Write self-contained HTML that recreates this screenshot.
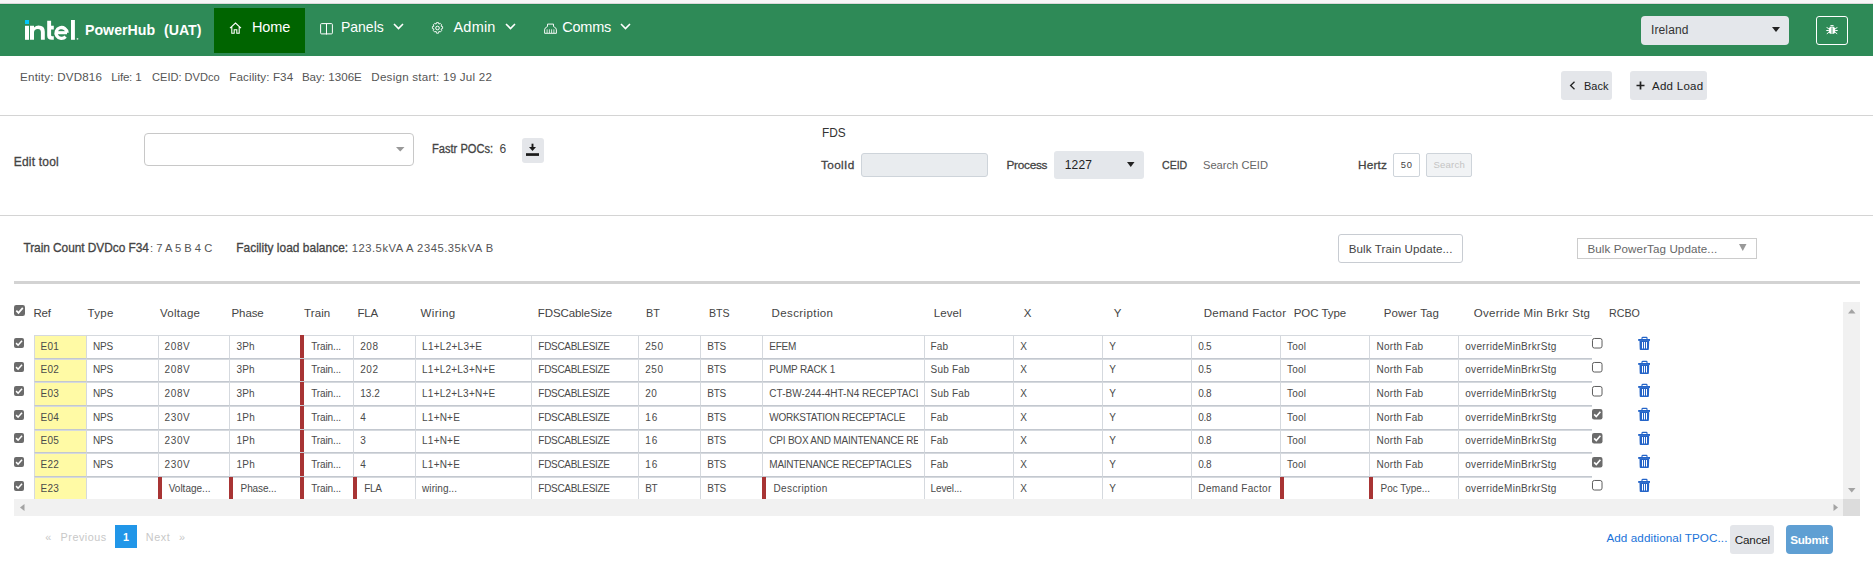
<!DOCTYPE html>
<html><head><meta charset="utf-8"><title>PowerHub</title><style>
*{margin:0;padding:0;box-sizing:border-box}
html,body{width:1873px;height:568px;overflow:hidden;background:#fff;font-family:"Liberation Sans",sans-serif}
.t{position:absolute;white-space:nowrap;line-height:1}
.r{position:absolute}
svg{position:absolute;overflow:visible}
</style></head>
<body>
<div class="r" style="left:0.00px;top:0.00px;width:1873.00px;height:3.00px;background:#f6f6f6"></div>
<div class="r" style="left:0.00px;top:3.00px;width:1873.00px;height:1.00px;background:#dcd8da"></div>
<div class="r" style="left:0.00px;top:4.00px;width:1873.00px;height:52.00px;background:#2e8a57"></div>
<div class="r" style="left:0.00px;top:4.00px;width:1873.00px;height:1.00px;background:#23854f"></div>
<svg style="left:25px;top:20px" width="56" height="21" viewBox="0 0 56 21"><rect x="0" y="0" width="4" height="4" fill="#00c7fd"/><rect x="0" y="5.8" width="4" height="14" fill="#fff"/><path d="M5 19.8 V5.8 H9 V7.4 Q10.8 5.5 13.6 5.5 Q19.8 5.5 19.8 11.8 V19.8 H15.9 V12.3 Q15.9 8.9 12.9 8.9 Q9 8.9 9 12.6 V19.8 Z" fill="#fff"/><path d="M22.2 0.8 H26.1 V5.8 H28.8 V9.4 H26.1 V15.2 Q26.1 16.3 27.3 16.3 H28.8 V19.8 H26.8 Q22.2 19.8 22.2 15.5 Z" fill="#fff"/><path d="M42.1 12.8 A5.55 5.45 0 1 0 40.6 16.7" fill="none" stroke="#fff" stroke-width="3.3"/><path d="M31.4 12.7 H42" fill="none" stroke="#fff" stroke-width="3.1"/><rect x="46" y="0" width="3.9" height="19.8" fill="#fff"/><circle cx="52.5" cy="18.8" r="0.9" fill="#fff" opacity="0.8"/></svg>
<div class="t" style="left:85.20px;top:22.28px;font-size:15.5px;color:#fff;font-weight:bold;transform:scaleX(0.9145);transform-origin:0 0;">PowerHub</div>
<div class="t" style="left:164.40px;top:22.38px;font-size:15.5px;color:#fff;font-weight:bold;transform:scaleX(0.9135);transform-origin:0 0;">(UAT)</div>
<div class="r" style="left:214.00px;top:8.00px;width:91.00px;height:45.00px;background:#006400"></div>
<svg style="left:229px;top:22px" width="13" height="12" viewBox="0 0 13 12"><path d="M1 6.2 L6.5 1 L12 6.2 M2.8 4.6 V11.3 H5.2 V7.8 H7.8 V11.3 H10.2 V4.6" fill="none" stroke="#fff" stroke-width="1.1"/></svg>
<div class="t" style="left:252.00px;top:19.97px;font-size:14.5px;color:#fff;letter-spacing:-0.133px;">Home</div>
<svg style="left:319.5px;top:22.5px" width="13" height="11.5" viewBox="0 0 13 11.5"><rect x="0.6" y="0.6" width="11.8" height="10.3" rx="1" fill="none" stroke="#fff" stroke-width="1"/><path d="M6.5 1 V11.5" fill="none" stroke="#fff" stroke-width="1"/></svg>
<div class="t" style="left:341.00px;top:19.97px;font-size:14.5px;color:#fff;transform:scaleX(0.9639);transform-origin:0 0;">Panels</div>
<svg style="left:392.5px;top:23.4px" width="11" height="7" viewBox="0 0 11 7"><path d="M1 1 L5.5 5.5 L10 1" fill="none" stroke="#fff" stroke-width="1.6"/></svg>
<svg style="left:431px;top:22px" width="13" height="12" viewBox="0 0 13 12"><circle cx="6.5" cy="6" r="1.8" fill="none" stroke="#fff" stroke-width="1"/><path d="M5.5 0.6 H7.5 L7.9 2.1 L9.3 1.4 L10.7 2.8 L10 4.2 L11.6 4.6 V6.6 L10 7 L10.7 8.6 L9.3 10 L7.9 9.3 L7.5 11.2 H5.5 L5.1 9.3 L3.7 10 L2.3 8.6 L3 7 L1.4 6.6 V4.6 L3 4.2 L2.3 2.8 L3.7 1.4 L5.1 2.1 Z" fill="none" stroke="#fff" stroke-width="0.9"/></svg>
<div class="t" style="left:453.50px;top:19.97px;font-size:14.5px;color:#fff;letter-spacing:0.2px;">Admin</div>
<svg style="left:504.7px;top:23.4px" width="11" height="7" viewBox="0 0 11 7"><path d="M1 1 L5.5 5.5 L10 1" fill="none" stroke="#fff" stroke-width="1.6"/></svg>
<svg style="left:543.5px;top:22.5px" width="13" height="11" viewBox="0 0 13 11"><path d="M0.6 10.3 V6.8 Q0.6 4.9 2.6 4.2 Q3.5 3.9 3.5 3 V1.1 H9.5 V3 Q9.5 3.9 10.4 4.2 Q12.4 4.9 12.4 6.8 V10.3 Z" fill="none" stroke="#fff" stroke-width="0.95"/><path d="M3.1 6.3 V10 M5.4 6.3 V10 M7.6 6.3 V10 M9.9 6.3 V10" stroke="#fff" stroke-width="0.8"/></svg>
<div class="t" style="left:562.25px;top:19.97px;font-size:14.5px;color:#fff;letter-spacing:-0.238px;">Comms</div>
<svg style="left:620.1px;top:23.4px" width="11" height="7" viewBox="0 0 11 7"><path d="M1 1 L5.5 5.5 L10 1" fill="none" stroke="#fff" stroke-width="1.6"/></svg>
<div class="r" style="left:1641.00px;top:16.00px;width:148.00px;height:29.00px;background:#e4e7eb;border-radius:4px"></div>
<div class="t" style="left:1651.00px;top:23.59px;font-size:12px;color:#333;letter-spacing:0.117px;">Ireland</div>
<svg style="left:1772px;top:27px" width="8" height="5" viewBox="0 0 8 5"><path d="M0 0 H8 L4 5 Z" fill="#222"/></svg>
<div class="r" style="left:1816.00px;top:16.00px;width:32.00px;height:29.00px;border:1px solid #fff;border-radius:3px"></div>
<svg style="left:1826px;top:23px" width="12" height="12" viewBox="0 0 12 12"><path d="M3.5 3.2 Q6 0.8 8.5 3.2 Z" fill="#fff"/><rect x="2.8" y="3.8" width="6.4" height="7" rx="2.6" fill="#fff"/><path d="M6 4.5 V10.5" stroke="#2e8a57" stroke-width="0.9"/><path d="M0.6 4.5 L2.8 5.6 M11.4 4.5 L9.2 5.6 M0.3 7.5 H2.8 M11.7 7.5 H9.2 M0.8 10.8 L2.9 9.3 M11.2 10.8 L9.1 9.3" stroke="#fff" stroke-width="1"/></svg>
<div class="t" style="left:20.10px;top:71.18px;font-size:11.6px;color:#555;letter-spacing:0.2px;">Entity: DVD816</div>
<div class="t" style="left:111.30px;top:71.18px;font-size:11.6px;color:#555;letter-spacing:-0.217px;">Life: 1</div>
<div class="t" style="left:152.30px;top:71.18px;font-size:11.6px;color:#555;transform:scaleX(0.9549);transform-origin:0 0;">CEID: DVDco</div>
<div class="t" style="left:229.30px;top:71.18px;font-size:11.6px;color:#555;letter-spacing:0.112px;">Facility: F34</div>
<div class="t" style="left:301.90px;top:71.18px;font-size:11.6px;color:#555;letter-spacing:0.0px;">Bay: 1306E</div>
<div class="t" style="left:371.30px;top:71.18px;font-size:11.6px;color:#555;letter-spacing:0.241px;">Design start: 19 Jul 22</div>
<div class="r" style="left:1561.00px;top:71.00px;width:51.00px;height:29.00px;background:#e4e6ea;border-radius:3px"></div>
<svg style="left:1569px;top:81px" width="7" height="9" viewBox="0 0 7 9"><path d="M5.5 0.8 L1.6 4.5 L5.5 8.2" fill="none" stroke="#222" stroke-width="1.3"/></svg>
<div class="t" style="left:1583.60px;top:80.86px;font-size:11.5px;color:#222;transform:scaleX(0.9531);transform-origin:0 0;">Back</div>
<div class="r" style="left:1630.00px;top:71.00px;width:77.00px;height:29.00px;background:#e4e6ea;border-radius:3px"></div>
<svg style="left:1636px;top:81px" width="9" height="9" viewBox="0 0 9 9"><path d="M4.5 0.5 V8.5 M0.5 4.5 H8.5" fill="none" stroke="#222" stroke-width="1.7"/></svg>
<div class="t" style="left:1652.00px;top:80.86px;font-size:11.5px;color:#222;letter-spacing:0.279px;">Add Load</div>
<div class="r" style="left:0.00px;top:115.00px;width:1873.00px;height:1.00px;background:#d4d4d4"></div>
<div class="t" style="left:13.75px;top:155.84px;font-size:12px;color:#444;-webkit-text-stroke:0.3px #444;letter-spacing:0.206px;">Edit tool</div>
<div class="r" style="left:144.00px;top:133.00px;width:270.00px;height:33.00px;border:1px solid #c8c8c8;border-radius:4px"></div>
<svg style="left:395.5px;top:147px" width="9" height="5" viewBox="0 0 9 5"><path d="M0 0 H8.5 L4.25 4.5 Z" fill="#999"/></svg>
<div class="t" style="left:431.90px;top:142.84px;font-size:12px;color:#444;-webkit-text-stroke:0.3px #444;transform:scaleX(0.9258);transform-origin:0 0;">Fastr POCs:</div>
<div class="t" style="left:499.40px;top:142.84px;font-size:12px;color:#444;">6</div>
<div class="r" style="left:522.00px;top:138.00px;width:22.00px;height:25.00px;background:#e4e6ea;border-radius:3px"></div>
<svg style="left:526px;top:144px" width="13" height="12" viewBox="0 0 13 12"><path d="M6.5 -0.3 V4" stroke="#1a1a1a" stroke-width="1.9"/><path d="M3 3 H10 L6.5 7 Z" fill="#1a1a1a"/><rect x="0" y="9.2" width="13" height="2.7" fill="#1a1a1a"/></svg>
<div class="t" style="left:821.50px;top:126.38px;font-size:13.6px;color:#333;transform:scaleX(0.8732);transform-origin:0 0;">FDS</div>
<div class="t" style="left:821.00px;top:160.01px;font-size:11.8px;color:#444;-webkit-text-stroke:0.3px #444;letter-spacing:0.36px;">ToolId</div>
<div class="r" style="left:861.00px;top:153.00px;width:127.00px;height:24.00px;background:#e9ecef;border:1px solid #ced4da;border-radius:3px"></div>
<div class="t" style="left:1006.50px;top:160.01px;font-size:11.8px;color:#444;-webkit-text-stroke:0.3px #444;letter-spacing:-0.275px;">Process</div>
<div class="r" style="left:1054.00px;top:151.00px;width:90.00px;height:28.00px;background:#e4e7eb;border-radius:3px"></div>
<div class="t" style="left:1064.75px;top:158.84px;font-size:12px;color:#222;letter-spacing:0.15px;">1227</div>
<svg style="left:1127px;top:162px" width="8" height="5" viewBox="0 0 8 5"><path d="M0 0 H7.5 L3.75 5 Z" fill="#222"/></svg>
<div class="t" style="left:1162.25px;top:159.81px;font-size:11.8px;color:#444;-webkit-text-stroke:0.3px #444;transform:scaleX(0.8954);transform-origin:0 0;">CEID</div>
<div class="t" style="left:1203.20px;top:159.61px;font-size:11.8px;color:#666;transform:scaleX(0.9441);transform-origin:0 0;">Search CEID</div>
<div class="t" style="left:1358.00px;top:159.81px;font-size:11.8px;color:#444;-webkit-text-stroke:0.3px #444;letter-spacing:0.2px;">Hertz</div>
<div class="r" style="left:1393.00px;top:153.00px;width:27.00px;height:24.00px;border:1px solid #ced4da;border-radius:2px"></div>
<div class="t" style="left:1400.80px;top:160.04px;font-size:9.4px;color:#444;letter-spacing:0.75px;">50</div>
<div class="r" style="left:1426.00px;top:153.00px;width:46.00px;height:24.00px;background:#f1f3f5;border:1px solid #ced4da;border-radius:2px"></div>
<div class="t" style="left:1433.40px;top:159.87px;font-size:9.6px;color:#c4c4c4;letter-spacing:0.2px;">Search</div>
<div class="r" style="left:0.00px;top:215.00px;width:1873.00px;height:1.00px;background:#d4d4d4"></div>
<div class="t" style="left:23.40px;top:242.72px;font-size:11.9px;color:#444;-webkit-text-stroke:0.3px #444;letter-spacing:-0.048px;">Train Count DVDco F34</div>
<div class="t" style="left:150.00px;top:243.12px;font-size:11.2px;color:#555;letter-spacing:0.004px;">: 7 A 5 B 4 C</div>
<div class="t" style="left:236.20px;top:242.72px;font-size:11.9px;color:#444;-webkit-text-stroke:0.3px #444;letter-spacing:0.043px;">Facility load balance:</div>
<div class="t" style="left:351.70px;top:243.12px;font-size:11.2px;color:#555;letter-spacing:0.539px;">123.5kVA A 2345.35kVA B</div>
<div class="r" style="left:1338.00px;top:234.00px;width:125.00px;height:29.00px;border:1px solid #c8ccd2;border-radius:3px"></div>
<div class="t" style="left:1348.75px;top:242.93px;font-size:11.6px;color:#444;letter-spacing:0.097px;">Bulk Train Update...</div>
<div class="r" style="left:1577.00px;top:238.00px;width:180.00px;height:21.00px;border:1px solid #cccccc"></div>
<div class="t" style="left:1587.50px;top:242.93px;font-size:11.6px;color:#666;letter-spacing:0.095px;">Bulk PowerTag Update...</div>
<svg style="left:1738.5px;top:244px" width="8" height="7" viewBox="0 0 8 7"><path d="M0 0 H7.5 L3.75 7 Z" fill="#999"/></svg>
<div class="r" style="left:14.00px;top:281.00px;width:1846.00px;height:3.00px;background:#d3d3d3"></div>
<svg style="left:14px;top:305px" width="11" height="11" viewBox="0 0 11 11"><rect x="0" y="0" width="11" height="11" rx="2.2" fill="#6b6b6b"/><path d="M2.3 5.6 L4.5 7.9 L8.8 2.9" fill="none" stroke="#fff" stroke-width="1.7"/></svg>
<div class="t" style="left:33.50px;top:307.51px;font-size:11.5px;color:#444;letter-spacing:-0.225px;">Ref</div>
<div class="t" style="left:87.50px;top:307.51px;font-size:11.5px;color:#444;letter-spacing:0.317px;">Type</div>
<div class="t" style="left:160.00px;top:307.51px;font-size:11.5px;color:#444;letter-spacing:0.275px;">Voltage</div>
<div class="t" style="left:231.50px;top:307.51px;font-size:11.5px;color:#444;letter-spacing:-0.088px;">Phase</div>
<div class="t" style="left:304.00px;top:307.51px;font-size:11.5px;color:#444;letter-spacing:0.112px;">Train</div>
<div class="t" style="left:357.50px;top:307.51px;font-size:11.5px;color:#444;letter-spacing:-0.25px;">FLA</div>
<div class="t" style="left:420.60px;top:307.51px;font-size:11.5px;color:#444;letter-spacing:0.41px;">Wiring</div>
<div class="t" style="left:537.75px;top:307.51px;font-size:11.5px;color:#444;letter-spacing:-0.082px;">FDSCableSize</div>
<div class="t" style="left:645.60px;top:307.51px;font-size:11.5px;color:#444;transform:scaleX(0.9388);transform-origin:0 0;">BT</div>
<div class="t" style="left:708.75px;top:307.51px;font-size:11.5px;color:#444;transform:scaleX(0.9239);transform-origin:0 0;">BTS</div>
<div class="t" style="left:771.60px;top:307.51px;font-size:11.5px;color:#444;letter-spacing:0.39px;">Description</div>
<div class="t" style="left:933.75px;top:307.51px;font-size:11.5px;color:#444;letter-spacing:0.062px;">Level</div>
<div class="t" style="left:1023.75px;top:307.51px;font-size:11.5px;color:#444;">X</div>
<div class="t" style="left:1113.75px;top:307.51px;font-size:11.5px;color:#444;">Y</div>
<div class="t" style="left:1203.75px;top:307.51px;font-size:11.5px;color:#444;letter-spacing:0.25px;">Demand Factor</div>
<div class="t" style="left:1293.75px;top:307.51px;font-size:11.5px;color:#444;letter-spacing:-0.05px;">POC Type</div>
<div class="t" style="left:1383.75px;top:307.51px;font-size:11.5px;color:#444;letter-spacing:0.138px;">Power Tag</div>
<div class="t" style="left:1473.75px;top:307.51px;font-size:11.5px;color:#444;letter-spacing:0.285px;">Override Min Brkr Stg</div>
<div class="t" style="left:1608.50px;top:307.51px;font-size:11.5px;color:#444;transform:scaleX(0.9293);transform-origin:0 0;">RCBO</div>
<div class="r" style="left:0;top:0;width:1873px;height:499px;overflow:hidden">
<svg style="left:14px;top:338.40000000000003px" width="10" height="10" viewBox="0 0 11 11"><rect x="0" y="0" width="11" height="11" rx="2.2" fill="#6b6b6b"/><path d="M2.3 5.6 L4.5 7.9 L8.8 2.9" fill="none" stroke="#fff" stroke-width="1.7"/></svg>
<div class="r" style="left:34.00px;top:335.00px;width:53.00px;height:24.00px;background:#fffaa5;border:1px solid #d5d9de;border-bottom:1px solid #c3c8cf;"></div>
<div class="r" style="left:35.00px;top:335.00px;width:45.00px;height:24px;overflow:hidden"><div class="t" style="left:5.60px;top:6.58px;font-size:10px;color:#4a4a4a;letter-spacing:0.154px">E01</div></div>
<div class="r" style="left:86.00px;top:335.00px;width:73.00px;height:24.00px;background:#fff;border:1px solid #d5d9de;border-bottom:1px solid #c3c8cf;"></div>
<div class="r" style="left:87.00px;top:335.00px;width:65.00px;height:24px;overflow:hidden"><div class="t" style="left:6.10px;top:6.58px;font-size:10px;color:#4a4a4a;letter-spacing:-0.302px">NPS</div></div>
<div class="r" style="left:158.00px;top:335.00px;width:72.00px;height:24.00px;background:#fff;border:1px solid #d5d9de;border-bottom:1px solid #c3c8cf;"></div>
<div class="r" style="left:159.00px;top:335.00px;width:64.00px;height:24px;overflow:hidden"><div class="t" style="left:5.60px;top:6.58px;font-size:10px;color:#4a4a4a;letter-spacing:0.610px">208V</div></div>
<div class="r" style="left:229.00px;top:335.00px;width:72.00px;height:24.00px;background:#fff;border:1px solid #d5d9de;border-bottom:1px solid #c3c8cf;"></div>
<div class="r" style="left:230.00px;top:335.00px;width:64.00px;height:24px;overflow:hidden"><div class="t" style="left:6.50px;top:6.58px;font-size:10px;color:#4a4a4a;letter-spacing:0.154px">3Ph</div></div>
<div class="r" style="left:300.00px;top:335.00px;width:54.00px;height:24.00px;background:#fff;border:1px solid #d5d9de;border-bottom:1px solid #c3c8cf;"></div>
<div class="r" style="left:300.00px;top:335.00px;width:3.80px;height:23.00px;background:#a83434"></div>
<div class="r" style="left:301.00px;top:335.00px;width:46.00px;height:24px;overflow:hidden"><div class="t" style="left:10.20px;top:6.58px;font-size:10px;color:#4a4a4a;letter-spacing:-0.121px">Train...</div></div>
<div class="r" style="left:353.00px;top:335.00px;width:63.00px;height:24.00px;background:#fff;border:1px solid #d5d9de;border-bottom:1px solid #c3c8cf;"></div>
<div class="r" style="left:354.00px;top:335.00px;width:55.00px;height:24px;overflow:hidden"><div class="t" style="left:6.20px;top:6.58px;font-size:10px;color:#4a4a4a;letter-spacing:0.610px">208</div></div>
<div class="r" style="left:415.00px;top:335.00px;width:117.00px;height:24.00px;background:#fff;border:1px solid #d5d9de;border-bottom:1px solid #c3c8cf;"></div>
<div class="r" style="left:416.00px;top:335.00px;width:109.00px;height:24px;overflow:hidden"><div class="t" style="left:6.10px;top:6.58px;font-size:10px;color:#4a4a4a;letter-spacing:0.258px">L1+L2+L3+E</div></div>
<div class="r" style="left:531.00px;top:335.00px;width:108.00px;height:24.00px;background:#fff;border:1px solid #d5d9de;border-bottom:1px solid #c3c8cf;"></div>
<div class="r" style="left:532.00px;top:335.00px;width:100.00px;height:24px;overflow:hidden"><div class="t" style="left:6.35px;top:6.58px;font-size:10px;color:#4a4a4a;letter-spacing:-0.302px">FDSCABLESIZE</div></div>
<div class="r" style="left:638.00px;top:335.00px;width:63.00px;height:24.00px;background:#fff;border:1px solid #d5d9de;border-bottom:1px solid #c3c8cf;"></div>
<div class="r" style="left:639.00px;top:335.00px;width:55.00px;height:24px;overflow:hidden"><div class="t" style="left:6.20px;top:6.58px;font-size:10px;color:#4a4a4a;letter-spacing:0.610px">250</div></div>
<div class="r" style="left:700.00px;top:335.00px;width:63.00px;height:24.00px;background:#fff;border:1px solid #d5d9de;border-bottom:1px solid #c3c8cf;"></div>
<div class="r" style="left:701.00px;top:335.00px;width:55.00px;height:24px;overflow:hidden"><div class="t" style="left:6.35px;top:6.58px;font-size:10px;color:#4a4a4a;letter-spacing:-0.302px">BTS</div></div>
<div class="r" style="left:762.00px;top:335.00px;width:163.00px;height:24.00px;background:#fff;border:1px solid #d5d9de;border-bottom:1px solid #c3c8cf;"></div>
<div class="r" style="left:763.00px;top:335.00px;width:155.00px;height:24px;overflow:hidden"><div class="t" style="left:6.35px;top:6.58px;font-size:10px;color:#4a4a4a;letter-spacing:-0.302px">EFEM</div></div>
<div class="r" style="left:924.00px;top:335.00px;width:90.00px;height:24.00px;background:#fff;border:1px solid #d5d9de;border-bottom:1px solid #c3c8cf;"></div>
<div class="r" style="left:925.00px;top:335.00px;width:82.00px;height:24px;overflow:hidden"><div class="t" style="left:5.60px;top:6.58px;font-size:10px;color:#4a4a4a;letter-spacing:0.083px">Fab</div></div>
<div class="r" style="left:1013.00px;top:335.00px;width:90.00px;height:24.00px;background:#fff;border:1px solid #d5d9de;border-bottom:1px solid #c3c8cf;"></div>
<div class="r" style="left:1014.00px;top:335.00px;width:82.00px;height:24px;overflow:hidden"><div class="t" style="left:6.20px;top:6.58px;font-size:10px;color:#4a4a4a;letter-spacing:0.000px">X</div></div>
<div class="r" style="left:1102.00px;top:335.00px;width:90.00px;height:24.00px;background:#fff;border:1px solid #d5d9de;border-bottom:1px solid #c3c8cf;"></div>
<div class="r" style="left:1103.00px;top:335.00px;width:82.00px;height:24px;overflow:hidden"><div class="t" style="left:6.35px;top:6.58px;font-size:10px;color:#4a4a4a;letter-spacing:0.000px">Y</div></div>
<div class="r" style="left:1191.00px;top:335.00px;width:90.00px;height:24.00px;background:#fff;border:1px solid #d5d9de;border-bottom:1px solid #c3c8cf;"></div>
<div class="r" style="left:1192.00px;top:335.00px;width:82.00px;height:24px;overflow:hidden"><div class="t" style="left:6.35px;top:6.58px;font-size:10px;color:#4a4a4a;letter-spacing:-0.300px">0.5</div></div>
<div class="r" style="left:1280.00px;top:335.00px;width:90.00px;height:24.00px;background:#fff;border:1px solid #d5d9de;border-bottom:1px solid #c3c8cf;"></div>
<div class="r" style="left:1281.00px;top:335.00px;width:82.00px;height:24px;overflow:hidden"><div class="t" style="left:6.10px;top:6.58px;font-size:10px;color:#4a4a4a;letter-spacing:0.211px">Tool</div></div>
<div class="r" style="left:1369.00px;top:335.00px;width:90.00px;height:24.00px;background:#fff;border:1px solid #d5d9de;border-bottom:1px solid #c3c8cf;"></div>
<div class="r" style="left:1370.00px;top:335.00px;width:82.00px;height:24px;overflow:hidden"><div class="t" style="left:6.50px;top:6.58px;font-size:10px;color:#4a4a4a;letter-spacing:0.264px">North Fab</div></div>
<div class="r" style="left:1458.00px;top:335.00px;width:134.25px;height:24.00px;background:#fff;border:1px solid #d5d9de;border-bottom:1px solid #c3c8cf;border-right:none;"></div>
<div class="r" style="left:1459.00px;top:335.00px;width:127.00px;height:24px;overflow:hidden"><div class="t" style="left:6.20px;top:6.58px;font-size:10px;color:#4a4a4a;letter-spacing:0.332px">overrideMinBrkrStg</div></div>
<svg style="left:1592.25px;top:338.1px" width="10.5" height="10.5" viewBox="0 0 11 11"><rect x="0.5" y="0.5" width="10" height="10" rx="2" fill="#fff" stroke="#555" stroke-width="1"/></svg>
<svg style="left:1638px;top:337px" width="12" height="13" viewBox="0 0 12 13"><path d="M4 2.3 V1 Q4 0.4 4.6 0.4 H8.4 Q9 0.4 9 1 V2.3" fill="none" stroke="#2464c8" stroke-width="1.1"/><rect x="0.2" y="2" width="11.8" height="1.9" fill="#2464c8"/><path d="M1.5 3.8 H11.2 L10.9 12.2 Q10.8 13 10.1 13 H2.5 Q1.8 13 1.7 12.2 Z" fill="#2464c8"/><path d="M4.5 5 V11.5 M6.5 5 V11.5 M8.5 5 V11.5" stroke="#fff" stroke-width="1"/></svg>
<svg style="left:14px;top:362.1px" width="10" height="10" viewBox="0 0 11 11"><rect x="0" y="0" width="11" height="11" rx="2.2" fill="#6b6b6b"/><path d="M2.3 5.6 L4.5 7.9 L8.8 2.9" fill="none" stroke="#fff" stroke-width="1.7"/></svg>
<div class="r" style="left:34.00px;top:359.00px;width:53.00px;height:23.00px;background:#fffaa5;border:1px solid #d5d9de;border-bottom:1px solid #c3c8cf;"></div>
<div class="r" style="left:35.00px;top:359.00px;width:45.00px;height:24px;overflow:hidden"><div class="t" style="left:5.60px;top:6.28px;font-size:10px;color:#4a4a4a;letter-spacing:0.154px">E02</div></div>
<div class="r" style="left:86.00px;top:359.00px;width:73.00px;height:23.00px;background:#fff;border:1px solid #d5d9de;border-bottom:1px solid #c3c8cf;"></div>
<div class="r" style="left:87.00px;top:359.00px;width:65.00px;height:24px;overflow:hidden"><div class="t" style="left:6.10px;top:6.28px;font-size:10px;color:#4a4a4a;letter-spacing:-0.302px">NPS</div></div>
<div class="r" style="left:158.00px;top:359.00px;width:72.00px;height:23.00px;background:#fff;border:1px solid #d5d9de;border-bottom:1px solid #c3c8cf;"></div>
<div class="r" style="left:159.00px;top:359.00px;width:64.00px;height:24px;overflow:hidden"><div class="t" style="left:5.60px;top:6.28px;font-size:10px;color:#4a4a4a;letter-spacing:0.610px">208V</div></div>
<div class="r" style="left:229.00px;top:359.00px;width:72.00px;height:23.00px;background:#fff;border:1px solid #d5d9de;border-bottom:1px solid #c3c8cf;"></div>
<div class="r" style="left:230.00px;top:359.00px;width:64.00px;height:24px;overflow:hidden"><div class="t" style="left:6.50px;top:6.28px;font-size:10px;color:#4a4a4a;letter-spacing:0.154px">3Ph</div></div>
<div class="r" style="left:300.00px;top:359.00px;width:54.00px;height:23.00px;background:#fff;border:1px solid #d5d9de;border-bottom:1px solid #c3c8cf;"></div>
<div class="r" style="left:300.00px;top:359.00px;width:3.80px;height:22.00px;background:#a83434"></div>
<div class="r" style="left:301.00px;top:359.00px;width:46.00px;height:24px;overflow:hidden"><div class="t" style="left:10.20px;top:6.28px;font-size:10px;color:#4a4a4a;letter-spacing:-0.121px">Train...</div></div>
<div class="r" style="left:353.00px;top:359.00px;width:63.00px;height:23.00px;background:#fff;border:1px solid #d5d9de;border-bottom:1px solid #c3c8cf;"></div>
<div class="r" style="left:354.00px;top:359.00px;width:55.00px;height:24px;overflow:hidden"><div class="t" style="left:6.20px;top:6.28px;font-size:10px;color:#4a4a4a;letter-spacing:0.610px">202</div></div>
<div class="r" style="left:415.00px;top:359.00px;width:117.00px;height:23.00px;background:#fff;border:1px solid #d5d9de;border-bottom:1px solid #c3c8cf;"></div>
<div class="r" style="left:416.00px;top:359.00px;width:109.00px;height:24px;overflow:hidden"><div class="t" style="left:6.10px;top:6.28px;font-size:10px;color:#4a4a4a;letter-spacing:0.218px">L1+L2+L3+N+E</div></div>
<div class="r" style="left:531.00px;top:359.00px;width:108.00px;height:23.00px;background:#fff;border:1px solid #d5d9de;border-bottom:1px solid #c3c8cf;"></div>
<div class="r" style="left:532.00px;top:359.00px;width:100.00px;height:24px;overflow:hidden"><div class="t" style="left:6.35px;top:6.28px;font-size:10px;color:#4a4a4a;letter-spacing:-0.302px">FDSCABLESIZE</div></div>
<div class="r" style="left:638.00px;top:359.00px;width:63.00px;height:23.00px;background:#fff;border:1px solid #d5d9de;border-bottom:1px solid #c3c8cf;"></div>
<div class="r" style="left:639.00px;top:359.00px;width:55.00px;height:24px;overflow:hidden"><div class="t" style="left:6.20px;top:6.28px;font-size:10px;color:#4a4a4a;letter-spacing:0.610px">250</div></div>
<div class="r" style="left:700.00px;top:359.00px;width:63.00px;height:23.00px;background:#fff;border:1px solid #d5d9de;border-bottom:1px solid #c3c8cf;"></div>
<div class="r" style="left:701.00px;top:359.00px;width:55.00px;height:24px;overflow:hidden"><div class="t" style="left:6.35px;top:6.28px;font-size:10px;color:#4a4a4a;letter-spacing:-0.302px">BTS</div></div>
<div class="r" style="left:762.00px;top:359.00px;width:163.00px;height:23.00px;background:#fff;border:1px solid #d5d9de;border-bottom:1px solid #c3c8cf;"></div>
<div class="r" style="left:763.00px;top:359.00px;width:155.00px;height:24px;overflow:hidden"><div class="t" style="left:6.35px;top:6.28px;font-size:10px;color:#4a4a4a;letter-spacing:-0.166px">PUMP RACK 1</div></div>
<div class="r" style="left:924.00px;top:359.00px;width:90.00px;height:23.00px;background:#fff;border:1px solid #d5d9de;border-bottom:1px solid #c3c8cf;"></div>
<div class="r" style="left:925.00px;top:359.00px;width:82.00px;height:24px;overflow:hidden"><div class="t" style="left:5.60px;top:6.28px;font-size:10px;color:#4a4a4a;letter-spacing:0.196px">Sub Fab</div></div>
<div class="r" style="left:1013.00px;top:359.00px;width:90.00px;height:23.00px;background:#fff;border:1px solid #d5d9de;border-bottom:1px solid #c3c8cf;"></div>
<div class="r" style="left:1014.00px;top:359.00px;width:82.00px;height:24px;overflow:hidden"><div class="t" style="left:6.20px;top:6.28px;font-size:10px;color:#4a4a4a;letter-spacing:0.000px">X</div></div>
<div class="r" style="left:1102.00px;top:359.00px;width:90.00px;height:23.00px;background:#fff;border:1px solid #d5d9de;border-bottom:1px solid #c3c8cf;"></div>
<div class="r" style="left:1103.00px;top:359.00px;width:82.00px;height:24px;overflow:hidden"><div class="t" style="left:6.35px;top:6.28px;font-size:10px;color:#4a4a4a;letter-spacing:0.000px">Y</div></div>
<div class="r" style="left:1191.00px;top:359.00px;width:90.00px;height:23.00px;background:#fff;border:1px solid #d5d9de;border-bottom:1px solid #c3c8cf;"></div>
<div class="r" style="left:1192.00px;top:359.00px;width:82.00px;height:24px;overflow:hidden"><div class="t" style="left:6.35px;top:6.28px;font-size:10px;color:#4a4a4a;letter-spacing:-0.300px">0.5</div></div>
<div class="r" style="left:1280.00px;top:359.00px;width:90.00px;height:23.00px;background:#fff;border:1px solid #d5d9de;border-bottom:1px solid #c3c8cf;"></div>
<div class="r" style="left:1281.00px;top:359.00px;width:82.00px;height:24px;overflow:hidden"><div class="t" style="left:6.10px;top:6.28px;font-size:10px;color:#4a4a4a;letter-spacing:0.211px">Tool</div></div>
<div class="r" style="left:1369.00px;top:359.00px;width:90.00px;height:23.00px;background:#fff;border:1px solid #d5d9de;border-bottom:1px solid #c3c8cf;"></div>
<div class="r" style="left:1370.00px;top:359.00px;width:82.00px;height:24px;overflow:hidden"><div class="t" style="left:6.50px;top:6.28px;font-size:10px;color:#4a4a4a;letter-spacing:0.264px">North Fab</div></div>
<div class="r" style="left:1458.00px;top:359.00px;width:134.25px;height:23.00px;background:#fff;border:1px solid #d5d9de;border-bottom:1px solid #c3c8cf;border-right:none;"></div>
<div class="r" style="left:1459.00px;top:359.00px;width:127.00px;height:24px;overflow:hidden"><div class="t" style="left:6.20px;top:6.28px;font-size:10px;color:#4a4a4a;letter-spacing:0.332px">overrideMinBrkrStg</div></div>
<svg style="left:1592.25px;top:361.8px" width="10.5" height="10.5" viewBox="0 0 11 11"><rect x="0.5" y="0.5" width="10" height="10" rx="2" fill="#fff" stroke="#555" stroke-width="1"/></svg>
<svg style="left:1638px;top:361px" width="12" height="13" viewBox="0 0 12 13"><path d="M4 2.3 V1 Q4 0.4 4.6 0.4 H8.4 Q9 0.4 9 1 V2.3" fill="none" stroke="#2464c8" stroke-width="1.1"/><rect x="0.2" y="2" width="11.8" height="1.9" fill="#2464c8"/><path d="M1.5 3.8 H11.2 L10.9 12.2 Q10.8 13 10.1 13 H2.5 Q1.8 13 1.7 12.2 Z" fill="#2464c8"/><path d="M4.5 5 V11.5 M6.5 5 V11.5 M8.5 5 V11.5" stroke="#fff" stroke-width="1"/></svg>
<svg style="left:14px;top:385.8px" width="10" height="10" viewBox="0 0 11 11"><rect x="0" y="0" width="11" height="11" rx="2.2" fill="#6b6b6b"/><path d="M2.3 5.6 L4.5 7.9 L8.8 2.9" fill="none" stroke="#fff" stroke-width="1.7"/></svg>
<div class="r" style="left:34.00px;top:382.00px;width:53.00px;height:24.00px;background:#fffaa5;border:1px solid #d5d9de;border-bottom:1px solid #c3c8cf;"></div>
<div class="r" style="left:35.00px;top:382.00px;width:45.00px;height:24px;overflow:hidden"><div class="t" style="left:5.60px;top:6.98px;font-size:10px;color:#4a4a4a;letter-spacing:0.154px">E03</div></div>
<div class="r" style="left:86.00px;top:382.00px;width:73.00px;height:24.00px;background:#fff;border:1px solid #d5d9de;border-bottom:1px solid #c3c8cf;"></div>
<div class="r" style="left:87.00px;top:382.00px;width:65.00px;height:24px;overflow:hidden"><div class="t" style="left:6.10px;top:6.98px;font-size:10px;color:#4a4a4a;letter-spacing:-0.302px">NPS</div></div>
<div class="r" style="left:158.00px;top:382.00px;width:72.00px;height:24.00px;background:#fff;border:1px solid #d5d9de;border-bottom:1px solid #c3c8cf;"></div>
<div class="r" style="left:159.00px;top:382.00px;width:64.00px;height:24px;overflow:hidden"><div class="t" style="left:5.60px;top:6.98px;font-size:10px;color:#4a4a4a;letter-spacing:0.610px">208V</div></div>
<div class="r" style="left:229.00px;top:382.00px;width:72.00px;height:24.00px;background:#fff;border:1px solid #d5d9de;border-bottom:1px solid #c3c8cf;"></div>
<div class="r" style="left:230.00px;top:382.00px;width:64.00px;height:24px;overflow:hidden"><div class="t" style="left:6.50px;top:6.98px;font-size:10px;color:#4a4a4a;letter-spacing:0.154px">3Ph</div></div>
<div class="r" style="left:300.00px;top:382.00px;width:54.00px;height:24.00px;background:#fff;border:1px solid #d5d9de;border-bottom:1px solid #c3c8cf;"></div>
<div class="r" style="left:300.00px;top:382.00px;width:3.80px;height:23.00px;background:#a83434"></div>
<div class="r" style="left:301.00px;top:382.00px;width:46.00px;height:24px;overflow:hidden"><div class="t" style="left:10.20px;top:6.98px;font-size:10px;color:#4a4a4a;letter-spacing:-0.121px">Train...</div></div>
<div class="r" style="left:353.00px;top:382.00px;width:63.00px;height:24.00px;background:#fff;border:1px solid #d5d9de;border-bottom:1px solid #c3c8cf;"></div>
<div class="r" style="left:354.00px;top:382.00px;width:55.00px;height:24px;overflow:hidden"><div class="t" style="left:6.20px;top:6.98px;font-size:10px;color:#4a4a4a;letter-spacing:0.092px">13.2</div></div>
<div class="r" style="left:415.00px;top:382.00px;width:117.00px;height:24.00px;background:#fff;border:1px solid #d5d9de;border-bottom:1px solid #c3c8cf;"></div>
<div class="r" style="left:416.00px;top:382.00px;width:109.00px;height:24px;overflow:hidden"><div class="t" style="left:6.10px;top:6.98px;font-size:10px;color:#4a4a4a;letter-spacing:0.218px">L1+L2+L3+N+E</div></div>
<div class="r" style="left:531.00px;top:382.00px;width:108.00px;height:24.00px;background:#fff;border:1px solid #d5d9de;border-bottom:1px solid #c3c8cf;"></div>
<div class="r" style="left:532.00px;top:382.00px;width:100.00px;height:24px;overflow:hidden"><div class="t" style="left:6.35px;top:6.98px;font-size:10px;color:#4a4a4a;letter-spacing:-0.302px">FDSCABLESIZE</div></div>
<div class="r" style="left:638.00px;top:382.00px;width:63.00px;height:24.00px;background:#fff;border:1px solid #d5d9de;border-bottom:1px solid #c3c8cf;"></div>
<div class="r" style="left:639.00px;top:382.00px;width:55.00px;height:24px;overflow:hidden"><div class="t" style="left:6.20px;top:6.98px;font-size:10px;color:#4a4a4a;letter-spacing:0.610px">20</div></div>
<div class="r" style="left:700.00px;top:382.00px;width:63.00px;height:24.00px;background:#fff;border:1px solid #d5d9de;border-bottom:1px solid #c3c8cf;"></div>
<div class="r" style="left:701.00px;top:382.00px;width:55.00px;height:24px;overflow:hidden"><div class="t" style="left:6.35px;top:6.98px;font-size:10px;color:#4a4a4a;letter-spacing:-0.302px">BTS</div></div>
<div class="r" style="left:762.00px;top:382.00px;width:163.00px;height:24.00px;background:#fff;border:1px solid #d5d9de;border-bottom:1px solid #c3c8cf;"></div>
<div class="r" style="left:763.00px;top:382.00px;width:155.00px;height:24px;overflow:hidden"><div class="t" style="left:6.35px;top:6.98px;font-size:10px;color:#4a4a4a;letter-spacing:0.004px">CT-BW-244-4HT-N4 RECEPTACLE</div></div>
<div class="r" style="left:924.00px;top:382.00px;width:90.00px;height:24.00px;background:#fff;border:1px solid #d5d9de;border-bottom:1px solid #c3c8cf;"></div>
<div class="r" style="left:925.00px;top:382.00px;width:82.00px;height:24px;overflow:hidden"><div class="t" style="left:5.60px;top:6.98px;font-size:10px;color:#4a4a4a;letter-spacing:0.196px">Sub Fab</div></div>
<div class="r" style="left:1013.00px;top:382.00px;width:90.00px;height:24.00px;background:#fff;border:1px solid #d5d9de;border-bottom:1px solid #c3c8cf;"></div>
<div class="r" style="left:1014.00px;top:382.00px;width:82.00px;height:24px;overflow:hidden"><div class="t" style="left:6.20px;top:6.98px;font-size:10px;color:#4a4a4a;letter-spacing:0.000px">X</div></div>
<div class="r" style="left:1102.00px;top:382.00px;width:90.00px;height:24.00px;background:#fff;border:1px solid #d5d9de;border-bottom:1px solid #c3c8cf;"></div>
<div class="r" style="left:1103.00px;top:382.00px;width:82.00px;height:24px;overflow:hidden"><div class="t" style="left:6.35px;top:6.98px;font-size:10px;color:#4a4a4a;letter-spacing:0.000px">Y</div></div>
<div class="r" style="left:1191.00px;top:382.00px;width:90.00px;height:24.00px;background:#fff;border:1px solid #d5d9de;border-bottom:1px solid #c3c8cf;"></div>
<div class="r" style="left:1192.00px;top:382.00px;width:82.00px;height:24px;overflow:hidden"><div class="t" style="left:6.35px;top:6.98px;font-size:10px;color:#4a4a4a;letter-spacing:-0.300px">0.8</div></div>
<div class="r" style="left:1280.00px;top:382.00px;width:90.00px;height:24.00px;background:#fff;border:1px solid #d5d9de;border-bottom:1px solid #c3c8cf;"></div>
<div class="r" style="left:1281.00px;top:382.00px;width:82.00px;height:24px;overflow:hidden"><div class="t" style="left:6.10px;top:6.98px;font-size:10px;color:#4a4a4a;letter-spacing:0.211px">Tool</div></div>
<div class="r" style="left:1369.00px;top:382.00px;width:90.00px;height:24.00px;background:#fff;border:1px solid #d5d9de;border-bottom:1px solid #c3c8cf;"></div>
<div class="r" style="left:1370.00px;top:382.00px;width:82.00px;height:24px;overflow:hidden"><div class="t" style="left:6.50px;top:6.98px;font-size:10px;color:#4a4a4a;letter-spacing:0.264px">North Fab</div></div>
<div class="r" style="left:1458.00px;top:382.00px;width:134.25px;height:24.00px;background:#fff;border:1px solid #d5d9de;border-bottom:1px solid #c3c8cf;border-right:none;"></div>
<div class="r" style="left:1459.00px;top:382.00px;width:127.00px;height:24px;overflow:hidden"><div class="t" style="left:6.20px;top:6.98px;font-size:10px;color:#4a4a4a;letter-spacing:0.332px">overrideMinBrkrStg</div></div>
<svg style="left:1592.25px;top:385.5px" width="10.5" height="10.5" viewBox="0 0 11 11"><rect x="0.5" y="0.5" width="10" height="10" rx="2" fill="#fff" stroke="#555" stroke-width="1"/></svg>
<svg style="left:1638px;top:384px" width="12" height="13" viewBox="0 0 12 13"><path d="M4 2.3 V1 Q4 0.4 4.6 0.4 H8.4 Q9 0.4 9 1 V2.3" fill="none" stroke="#2464c8" stroke-width="1.1"/><rect x="0.2" y="2" width="11.8" height="1.9" fill="#2464c8"/><path d="M1.5 3.8 H11.2 L10.9 12.2 Q10.8 13 10.1 13 H2.5 Q1.8 13 1.7 12.2 Z" fill="#2464c8"/><path d="M4.5 5 V11.5 M6.5 5 V11.5 M8.5 5 V11.5" stroke="#fff" stroke-width="1"/></svg>
<svg style="left:14px;top:409.5px" width="10" height="10" viewBox="0 0 11 11"><rect x="0" y="0" width="11" height="11" rx="2.2" fill="#6b6b6b"/><path d="M2.3 5.6 L4.5 7.9 L8.8 2.9" fill="none" stroke="#fff" stroke-width="1.7"/></svg>
<div class="r" style="left:34.00px;top:406.00px;width:53.00px;height:24.00px;background:#fffaa5;border:1px solid #d5d9de;border-bottom:1px solid #c3c8cf;"></div>
<div class="r" style="left:35.00px;top:406.00px;width:45.00px;height:24px;overflow:hidden"><div class="t" style="left:5.60px;top:6.68px;font-size:10px;color:#4a4a4a;letter-spacing:0.154px">E04</div></div>
<div class="r" style="left:86.00px;top:406.00px;width:73.00px;height:24.00px;background:#fff;border:1px solid #d5d9de;border-bottom:1px solid #c3c8cf;"></div>
<div class="r" style="left:87.00px;top:406.00px;width:65.00px;height:24px;overflow:hidden"><div class="t" style="left:6.10px;top:6.68px;font-size:10px;color:#4a4a4a;letter-spacing:-0.302px">NPS</div></div>
<div class="r" style="left:158.00px;top:406.00px;width:72.00px;height:24.00px;background:#fff;border:1px solid #d5d9de;border-bottom:1px solid #c3c8cf;"></div>
<div class="r" style="left:159.00px;top:406.00px;width:64.00px;height:24px;overflow:hidden"><div class="t" style="left:5.60px;top:6.68px;font-size:10px;color:#4a4a4a;letter-spacing:0.610px">230V</div></div>
<div class="r" style="left:229.00px;top:406.00px;width:72.00px;height:24.00px;background:#fff;border:1px solid #d5d9de;border-bottom:1px solid #c3c8cf;"></div>
<div class="r" style="left:230.00px;top:406.00px;width:64.00px;height:24px;overflow:hidden"><div class="t" style="left:6.50px;top:6.68px;font-size:10px;color:#4a4a4a;letter-spacing:0.287px">1Ph</div></div>
<div class="r" style="left:300.00px;top:406.00px;width:54.00px;height:24.00px;background:#fff;border:1px solid #d5d9de;border-bottom:1px solid #c3c8cf;"></div>
<div class="r" style="left:300.00px;top:406.00px;width:3.80px;height:23.00px;background:#a83434"></div>
<div class="r" style="left:301.00px;top:406.00px;width:46.00px;height:24px;overflow:hidden"><div class="t" style="left:10.20px;top:6.68px;font-size:10px;color:#4a4a4a;letter-spacing:-0.121px">Train...</div></div>
<div class="r" style="left:353.00px;top:406.00px;width:63.00px;height:24.00px;background:#fff;border:1px solid #d5d9de;border-bottom:1px solid #c3c8cf;"></div>
<div class="r" style="left:354.00px;top:406.00px;width:55.00px;height:24px;overflow:hidden"><div class="t" style="left:6.20px;top:6.68px;font-size:10px;color:#4a4a4a;letter-spacing:0.000px">4</div></div>
<div class="r" style="left:415.00px;top:406.00px;width:117.00px;height:24.00px;background:#fff;border:1px solid #d5d9de;border-bottom:1px solid #c3c8cf;"></div>
<div class="r" style="left:416.00px;top:406.00px;width:109.00px;height:24px;overflow:hidden"><div class="t" style="left:6.10px;top:6.68px;font-size:10px;color:#4a4a4a;letter-spacing:0.206px">L1+N+E</div></div>
<div class="r" style="left:531.00px;top:406.00px;width:108.00px;height:24.00px;background:#fff;border:1px solid #d5d9de;border-bottom:1px solid #c3c8cf;"></div>
<div class="r" style="left:532.00px;top:406.00px;width:100.00px;height:24px;overflow:hidden"><div class="t" style="left:6.35px;top:6.68px;font-size:10px;color:#4a4a4a;letter-spacing:-0.302px">FDSCABLESIZE</div></div>
<div class="r" style="left:638.00px;top:406.00px;width:63.00px;height:24.00px;background:#fff;border:1px solid #d5d9de;border-bottom:1px solid #c3c8cf;"></div>
<div class="r" style="left:639.00px;top:406.00px;width:55.00px;height:24px;overflow:hidden"><div class="t" style="left:6.20px;top:6.68px;font-size:10px;color:#4a4a4a;letter-spacing:0.876px">16</div></div>
<div class="r" style="left:700.00px;top:406.00px;width:63.00px;height:24.00px;background:#fff;border:1px solid #d5d9de;border-bottom:1px solid #c3c8cf;"></div>
<div class="r" style="left:701.00px;top:406.00px;width:55.00px;height:24px;overflow:hidden"><div class="t" style="left:6.35px;top:6.68px;font-size:10px;color:#4a4a4a;letter-spacing:-0.302px">BTS</div></div>
<div class="r" style="left:762.00px;top:406.00px;width:163.00px;height:24.00px;background:#fff;border:1px solid #d5d9de;border-bottom:1px solid #c3c8cf;"></div>
<div class="r" style="left:763.00px;top:406.00px;width:155.00px;height:24px;overflow:hidden"><div class="t" style="left:6.35px;top:6.68px;font-size:10px;color:#4a4a4a;letter-spacing:-0.270px">WORKSTATION RECEPTACLE</div></div>
<div class="r" style="left:924.00px;top:406.00px;width:90.00px;height:24.00px;background:#fff;border:1px solid #d5d9de;border-bottom:1px solid #c3c8cf;"></div>
<div class="r" style="left:925.00px;top:406.00px;width:82.00px;height:24px;overflow:hidden"><div class="t" style="left:5.60px;top:6.68px;font-size:10px;color:#4a4a4a;letter-spacing:0.083px">Fab</div></div>
<div class="r" style="left:1013.00px;top:406.00px;width:90.00px;height:24.00px;background:#fff;border:1px solid #d5d9de;border-bottom:1px solid #c3c8cf;"></div>
<div class="r" style="left:1014.00px;top:406.00px;width:82.00px;height:24px;overflow:hidden"><div class="t" style="left:6.20px;top:6.68px;font-size:10px;color:#4a4a4a;letter-spacing:0.000px">X</div></div>
<div class="r" style="left:1102.00px;top:406.00px;width:90.00px;height:24.00px;background:#fff;border:1px solid #d5d9de;border-bottom:1px solid #c3c8cf;"></div>
<div class="r" style="left:1103.00px;top:406.00px;width:82.00px;height:24px;overflow:hidden"><div class="t" style="left:6.35px;top:6.68px;font-size:10px;color:#4a4a4a;letter-spacing:0.000px">Y</div></div>
<div class="r" style="left:1191.00px;top:406.00px;width:90.00px;height:24.00px;background:#fff;border:1px solid #d5d9de;border-bottom:1px solid #c3c8cf;"></div>
<div class="r" style="left:1192.00px;top:406.00px;width:82.00px;height:24px;overflow:hidden"><div class="t" style="left:6.35px;top:6.68px;font-size:10px;color:#4a4a4a;letter-spacing:-0.300px">0.8</div></div>
<div class="r" style="left:1280.00px;top:406.00px;width:90.00px;height:24.00px;background:#fff;border:1px solid #d5d9de;border-bottom:1px solid #c3c8cf;"></div>
<div class="r" style="left:1281.00px;top:406.00px;width:82.00px;height:24px;overflow:hidden"><div class="t" style="left:6.10px;top:6.68px;font-size:10px;color:#4a4a4a;letter-spacing:0.211px">Tool</div></div>
<div class="r" style="left:1369.00px;top:406.00px;width:90.00px;height:24.00px;background:#fff;border:1px solid #d5d9de;border-bottom:1px solid #c3c8cf;"></div>
<div class="r" style="left:1370.00px;top:406.00px;width:82.00px;height:24px;overflow:hidden"><div class="t" style="left:6.50px;top:6.68px;font-size:10px;color:#4a4a4a;letter-spacing:0.264px">North Fab</div></div>
<div class="r" style="left:1458.00px;top:406.00px;width:134.25px;height:24.00px;background:#fff;border:1px solid #d5d9de;border-bottom:1px solid #c3c8cf;border-right:none;"></div>
<div class="r" style="left:1459.00px;top:406.00px;width:127.00px;height:24px;overflow:hidden"><div class="t" style="left:6.20px;top:6.68px;font-size:10px;color:#4a4a4a;letter-spacing:0.332px">overrideMinBrkrStg</div></div>
<svg style="left:1592.25px;top:409.2px" width="10.5" height="10.5" viewBox="0 0 11 11"><rect x="0" y="0" width="11" height="11" rx="2.2" fill="#6b6b6b"/><path d="M2.3 5.6 L4.5 7.9 L8.8 2.9" fill="none" stroke="#fff" stroke-width="1.7"/></svg>
<svg style="left:1638px;top:408px" width="12" height="13" viewBox="0 0 12 13"><path d="M4 2.3 V1 Q4 0.4 4.6 0.4 H8.4 Q9 0.4 9 1 V2.3" fill="none" stroke="#2464c8" stroke-width="1.1"/><rect x="0.2" y="2" width="11.8" height="1.9" fill="#2464c8"/><path d="M1.5 3.8 H11.2 L10.9 12.2 Q10.8 13 10.1 13 H2.5 Q1.8 13 1.7 12.2 Z" fill="#2464c8"/><path d="M4.5 5 V11.5 M6.5 5 V11.5 M8.5 5 V11.5" stroke="#fff" stroke-width="1"/></svg>
<svg style="left:14px;top:433.20000000000005px" width="10" height="10" viewBox="0 0 11 11"><rect x="0" y="0" width="11" height="11" rx="2.2" fill="#6b6b6b"/><path d="M2.3 5.6 L4.5 7.9 L8.8 2.9" fill="none" stroke="#fff" stroke-width="1.7"/></svg>
<div class="r" style="left:34.00px;top:430.00px;width:53.00px;height:23.00px;background:#fffaa5;border:1px solid #d5d9de;border-bottom:1px solid #c3c8cf;"></div>
<div class="r" style="left:35.00px;top:430.00px;width:45.00px;height:24px;overflow:hidden"><div class="t" style="left:5.60px;top:6.38px;font-size:10px;color:#4a4a4a;letter-spacing:0.154px">E05</div></div>
<div class="r" style="left:86.00px;top:430.00px;width:73.00px;height:23.00px;background:#fff;border:1px solid #d5d9de;border-bottom:1px solid #c3c8cf;"></div>
<div class="r" style="left:87.00px;top:430.00px;width:65.00px;height:24px;overflow:hidden"><div class="t" style="left:6.10px;top:6.38px;font-size:10px;color:#4a4a4a;letter-spacing:-0.302px">NPS</div></div>
<div class="r" style="left:158.00px;top:430.00px;width:72.00px;height:23.00px;background:#fff;border:1px solid #d5d9de;border-bottom:1px solid #c3c8cf;"></div>
<div class="r" style="left:159.00px;top:430.00px;width:64.00px;height:24px;overflow:hidden"><div class="t" style="left:5.60px;top:6.38px;font-size:10px;color:#4a4a4a;letter-spacing:0.610px">230V</div></div>
<div class="r" style="left:229.00px;top:430.00px;width:72.00px;height:23.00px;background:#fff;border:1px solid #d5d9de;border-bottom:1px solid #c3c8cf;"></div>
<div class="r" style="left:230.00px;top:430.00px;width:64.00px;height:24px;overflow:hidden"><div class="t" style="left:6.50px;top:6.38px;font-size:10px;color:#4a4a4a;letter-spacing:0.287px">1Ph</div></div>
<div class="r" style="left:300.00px;top:430.00px;width:54.00px;height:23.00px;background:#fff;border:1px solid #d5d9de;border-bottom:1px solid #c3c8cf;"></div>
<div class="r" style="left:300.00px;top:430.00px;width:3.80px;height:22.00px;background:#a83434"></div>
<div class="r" style="left:301.00px;top:430.00px;width:46.00px;height:24px;overflow:hidden"><div class="t" style="left:10.20px;top:6.38px;font-size:10px;color:#4a4a4a;letter-spacing:-0.121px">Train...</div></div>
<div class="r" style="left:353.00px;top:430.00px;width:63.00px;height:23.00px;background:#fff;border:1px solid #d5d9de;border-bottom:1px solid #c3c8cf;"></div>
<div class="r" style="left:354.00px;top:430.00px;width:55.00px;height:24px;overflow:hidden"><div class="t" style="left:6.20px;top:6.38px;font-size:10px;color:#4a4a4a;letter-spacing:0.000px">3</div></div>
<div class="r" style="left:415.00px;top:430.00px;width:117.00px;height:23.00px;background:#fff;border:1px solid #d5d9de;border-bottom:1px solid #c3c8cf;"></div>
<div class="r" style="left:416.00px;top:430.00px;width:109.00px;height:24px;overflow:hidden"><div class="t" style="left:6.10px;top:6.38px;font-size:10px;color:#4a4a4a;letter-spacing:0.206px">L1+N+E</div></div>
<div class="r" style="left:531.00px;top:430.00px;width:108.00px;height:23.00px;background:#fff;border:1px solid #d5d9de;border-bottom:1px solid #c3c8cf;"></div>
<div class="r" style="left:532.00px;top:430.00px;width:100.00px;height:24px;overflow:hidden"><div class="t" style="left:6.35px;top:6.38px;font-size:10px;color:#4a4a4a;letter-spacing:-0.302px">FDSCABLESIZE</div></div>
<div class="r" style="left:638.00px;top:430.00px;width:63.00px;height:23.00px;background:#fff;border:1px solid #d5d9de;border-bottom:1px solid #c3c8cf;"></div>
<div class="r" style="left:639.00px;top:430.00px;width:55.00px;height:24px;overflow:hidden"><div class="t" style="left:6.20px;top:6.38px;font-size:10px;color:#4a4a4a;letter-spacing:0.876px">16</div></div>
<div class="r" style="left:700.00px;top:430.00px;width:63.00px;height:23.00px;background:#fff;border:1px solid #d5d9de;border-bottom:1px solid #c3c8cf;"></div>
<div class="r" style="left:701.00px;top:430.00px;width:55.00px;height:24px;overflow:hidden"><div class="t" style="left:6.35px;top:6.38px;font-size:10px;color:#4a4a4a;letter-spacing:-0.302px">BTS</div></div>
<div class="r" style="left:762.00px;top:430.00px;width:163.00px;height:23.00px;background:#fff;border:1px solid #d5d9de;border-bottom:1px solid #c3c8cf;"></div>
<div class="r" style="left:763.00px;top:430.00px;width:155.00px;height:24px;overflow:hidden"><div class="t" style="left:6.35px;top:6.38px;font-size:10px;color:#4a4a4a;letter-spacing:-0.222px">CPI BOX AND MAINTENANCE RECEPTACLES</div></div>
<div class="r" style="left:924.00px;top:430.00px;width:90.00px;height:23.00px;background:#fff;border:1px solid #d5d9de;border-bottom:1px solid #c3c8cf;"></div>
<div class="r" style="left:925.00px;top:430.00px;width:82.00px;height:24px;overflow:hidden"><div class="t" style="left:5.60px;top:6.38px;font-size:10px;color:#4a4a4a;letter-spacing:0.083px">Fab</div></div>
<div class="r" style="left:1013.00px;top:430.00px;width:90.00px;height:23.00px;background:#fff;border:1px solid #d5d9de;border-bottom:1px solid #c3c8cf;"></div>
<div class="r" style="left:1014.00px;top:430.00px;width:82.00px;height:24px;overflow:hidden"><div class="t" style="left:6.20px;top:6.38px;font-size:10px;color:#4a4a4a;letter-spacing:0.000px">X</div></div>
<div class="r" style="left:1102.00px;top:430.00px;width:90.00px;height:23.00px;background:#fff;border:1px solid #d5d9de;border-bottom:1px solid #c3c8cf;"></div>
<div class="r" style="left:1103.00px;top:430.00px;width:82.00px;height:24px;overflow:hidden"><div class="t" style="left:6.35px;top:6.38px;font-size:10px;color:#4a4a4a;letter-spacing:0.000px">Y</div></div>
<div class="r" style="left:1191.00px;top:430.00px;width:90.00px;height:23.00px;background:#fff;border:1px solid #d5d9de;border-bottom:1px solid #c3c8cf;"></div>
<div class="r" style="left:1192.00px;top:430.00px;width:82.00px;height:24px;overflow:hidden"><div class="t" style="left:6.35px;top:6.38px;font-size:10px;color:#4a4a4a;letter-spacing:-0.300px">0.8</div></div>
<div class="r" style="left:1280.00px;top:430.00px;width:90.00px;height:23.00px;background:#fff;border:1px solid #d5d9de;border-bottom:1px solid #c3c8cf;"></div>
<div class="r" style="left:1281.00px;top:430.00px;width:82.00px;height:24px;overflow:hidden"><div class="t" style="left:6.10px;top:6.38px;font-size:10px;color:#4a4a4a;letter-spacing:0.211px">Tool</div></div>
<div class="r" style="left:1369.00px;top:430.00px;width:90.00px;height:23.00px;background:#fff;border:1px solid #d5d9de;border-bottom:1px solid #c3c8cf;"></div>
<div class="r" style="left:1370.00px;top:430.00px;width:82.00px;height:24px;overflow:hidden"><div class="t" style="left:6.50px;top:6.38px;font-size:10px;color:#4a4a4a;letter-spacing:0.264px">North Fab</div></div>
<div class="r" style="left:1458.00px;top:430.00px;width:134.25px;height:23.00px;background:#fff;border:1px solid #d5d9de;border-bottom:1px solid #c3c8cf;border-right:none;"></div>
<div class="r" style="left:1459.00px;top:430.00px;width:127.00px;height:24px;overflow:hidden"><div class="t" style="left:6.20px;top:6.38px;font-size:10px;color:#4a4a4a;letter-spacing:0.332px">overrideMinBrkrStg</div></div>
<svg style="left:1592.25px;top:432.90000000000003px" width="10.5" height="10.5" viewBox="0 0 11 11"><rect x="0" y="0" width="11" height="11" rx="2.2" fill="#6b6b6b"/><path d="M2.3 5.6 L4.5 7.9 L8.8 2.9" fill="none" stroke="#fff" stroke-width="1.7"/></svg>
<svg style="left:1638px;top:432px" width="12" height="13" viewBox="0 0 12 13"><path d="M4 2.3 V1 Q4 0.4 4.6 0.4 H8.4 Q9 0.4 9 1 V2.3" fill="none" stroke="#2464c8" stroke-width="1.1"/><rect x="0.2" y="2" width="11.8" height="1.9" fill="#2464c8"/><path d="M1.5 3.8 H11.2 L10.9 12.2 Q10.8 13 10.1 13 H2.5 Q1.8 13 1.7 12.2 Z" fill="#2464c8"/><path d="M4.5 5 V11.5 M6.5 5 V11.5 M8.5 5 V11.5" stroke="#fff" stroke-width="1"/></svg>
<svg style="left:14px;top:456.90000000000003px" width="10" height="10" viewBox="0 0 11 11"><rect x="0" y="0" width="11" height="11" rx="2.2" fill="#6b6b6b"/><path d="M2.3 5.6 L4.5 7.9 L8.8 2.9" fill="none" stroke="#fff" stroke-width="1.7"/></svg>
<div class="r" style="left:34.00px;top:453.00px;width:53.00px;height:24.00px;background:#fffaa5;border:1px solid #d5d9de;border-bottom:1px solid #c3c8cf;"></div>
<div class="r" style="left:35.00px;top:453.00px;width:45.00px;height:24px;overflow:hidden"><div class="t" style="left:5.60px;top:7.08px;font-size:10px;color:#4a4a4a;letter-spacing:0.154px">E22</div></div>
<div class="r" style="left:86.00px;top:453.00px;width:73.00px;height:24.00px;background:#fff;border:1px solid #d5d9de;border-bottom:1px solid #c3c8cf;"></div>
<div class="r" style="left:87.00px;top:453.00px;width:65.00px;height:24px;overflow:hidden"><div class="t" style="left:6.10px;top:7.08px;font-size:10px;color:#4a4a4a;letter-spacing:-0.302px">NPS</div></div>
<div class="r" style="left:158.00px;top:453.00px;width:72.00px;height:24.00px;background:#fff;border:1px solid #d5d9de;border-bottom:1px solid #c3c8cf;"></div>
<div class="r" style="left:159.00px;top:453.00px;width:64.00px;height:24px;overflow:hidden"><div class="t" style="left:5.60px;top:7.08px;font-size:10px;color:#4a4a4a;letter-spacing:0.610px">230V</div></div>
<div class="r" style="left:229.00px;top:453.00px;width:72.00px;height:24.00px;background:#fff;border:1px solid #d5d9de;border-bottom:1px solid #c3c8cf;"></div>
<div class="r" style="left:230.00px;top:453.00px;width:64.00px;height:24px;overflow:hidden"><div class="t" style="left:6.50px;top:7.08px;font-size:10px;color:#4a4a4a;letter-spacing:0.287px">1Ph</div></div>
<div class="r" style="left:300.00px;top:453.00px;width:54.00px;height:24.00px;background:#fff;border:1px solid #d5d9de;border-bottom:1px solid #c3c8cf;"></div>
<div class="r" style="left:300.00px;top:453.00px;width:3.80px;height:23.00px;background:#a83434"></div>
<div class="r" style="left:301.00px;top:453.00px;width:46.00px;height:24px;overflow:hidden"><div class="t" style="left:10.20px;top:7.08px;font-size:10px;color:#4a4a4a;letter-spacing:-0.121px">Train...</div></div>
<div class="r" style="left:353.00px;top:453.00px;width:63.00px;height:24.00px;background:#fff;border:1px solid #d5d9de;border-bottom:1px solid #c3c8cf;"></div>
<div class="r" style="left:354.00px;top:453.00px;width:55.00px;height:24px;overflow:hidden"><div class="t" style="left:6.20px;top:7.08px;font-size:10px;color:#4a4a4a;letter-spacing:0.000px">4</div></div>
<div class="r" style="left:415.00px;top:453.00px;width:117.00px;height:24.00px;background:#fff;border:1px solid #d5d9de;border-bottom:1px solid #c3c8cf;"></div>
<div class="r" style="left:416.00px;top:453.00px;width:109.00px;height:24px;overflow:hidden"><div class="t" style="left:6.10px;top:7.08px;font-size:10px;color:#4a4a4a;letter-spacing:0.206px">L1+N+E</div></div>
<div class="r" style="left:531.00px;top:453.00px;width:108.00px;height:24.00px;background:#fff;border:1px solid #d5d9de;border-bottom:1px solid #c3c8cf;"></div>
<div class="r" style="left:532.00px;top:453.00px;width:100.00px;height:24px;overflow:hidden"><div class="t" style="left:6.35px;top:7.08px;font-size:10px;color:#4a4a4a;letter-spacing:-0.302px">FDSCABLESIZE</div></div>
<div class="r" style="left:638.00px;top:453.00px;width:63.00px;height:24.00px;background:#fff;border:1px solid #d5d9de;border-bottom:1px solid #c3c8cf;"></div>
<div class="r" style="left:639.00px;top:453.00px;width:55.00px;height:24px;overflow:hidden"><div class="t" style="left:6.20px;top:7.08px;font-size:10px;color:#4a4a4a;letter-spacing:0.876px">16</div></div>
<div class="r" style="left:700.00px;top:453.00px;width:63.00px;height:24.00px;background:#fff;border:1px solid #d5d9de;border-bottom:1px solid #c3c8cf;"></div>
<div class="r" style="left:701.00px;top:453.00px;width:55.00px;height:24px;overflow:hidden"><div class="t" style="left:6.35px;top:7.08px;font-size:10px;color:#4a4a4a;letter-spacing:-0.302px">BTS</div></div>
<div class="r" style="left:762.00px;top:453.00px;width:163.00px;height:24.00px;background:#fff;border:1px solid #d5d9de;border-bottom:1px solid #c3c8cf;"></div>
<div class="r" style="left:763.00px;top:453.00px;width:155.00px;height:24px;overflow:hidden"><div class="t" style="left:6.35px;top:7.08px;font-size:10px;color:#4a4a4a;letter-spacing:-0.271px">MAINTENANCE RECEPTACLES</div></div>
<div class="r" style="left:924.00px;top:453.00px;width:90.00px;height:24.00px;background:#fff;border:1px solid #d5d9de;border-bottom:1px solid #c3c8cf;"></div>
<div class="r" style="left:925.00px;top:453.00px;width:82.00px;height:24px;overflow:hidden"><div class="t" style="left:5.60px;top:7.08px;font-size:10px;color:#4a4a4a;letter-spacing:0.083px">Fab</div></div>
<div class="r" style="left:1013.00px;top:453.00px;width:90.00px;height:24.00px;background:#fff;border:1px solid #d5d9de;border-bottom:1px solid #c3c8cf;"></div>
<div class="r" style="left:1014.00px;top:453.00px;width:82.00px;height:24px;overflow:hidden"><div class="t" style="left:6.20px;top:7.08px;font-size:10px;color:#4a4a4a;letter-spacing:0.000px">X</div></div>
<div class="r" style="left:1102.00px;top:453.00px;width:90.00px;height:24.00px;background:#fff;border:1px solid #d5d9de;border-bottom:1px solid #c3c8cf;"></div>
<div class="r" style="left:1103.00px;top:453.00px;width:82.00px;height:24px;overflow:hidden"><div class="t" style="left:6.35px;top:7.08px;font-size:10px;color:#4a4a4a;letter-spacing:0.000px">Y</div></div>
<div class="r" style="left:1191.00px;top:453.00px;width:90.00px;height:24.00px;background:#fff;border:1px solid #d5d9de;border-bottom:1px solid #c3c8cf;"></div>
<div class="r" style="left:1192.00px;top:453.00px;width:82.00px;height:24px;overflow:hidden"><div class="t" style="left:6.35px;top:7.08px;font-size:10px;color:#4a4a4a;letter-spacing:-0.300px">0.8</div></div>
<div class="r" style="left:1280.00px;top:453.00px;width:90.00px;height:24.00px;background:#fff;border:1px solid #d5d9de;border-bottom:1px solid #c3c8cf;"></div>
<div class="r" style="left:1281.00px;top:453.00px;width:82.00px;height:24px;overflow:hidden"><div class="t" style="left:6.10px;top:7.08px;font-size:10px;color:#4a4a4a;letter-spacing:0.211px">Tool</div></div>
<div class="r" style="left:1369.00px;top:453.00px;width:90.00px;height:24.00px;background:#fff;border:1px solid #d5d9de;border-bottom:1px solid #c3c8cf;"></div>
<div class="r" style="left:1370.00px;top:453.00px;width:82.00px;height:24px;overflow:hidden"><div class="t" style="left:6.50px;top:7.08px;font-size:10px;color:#4a4a4a;letter-spacing:0.264px">North Fab</div></div>
<div class="r" style="left:1458.00px;top:453.00px;width:134.25px;height:24.00px;background:#fff;border:1px solid #d5d9de;border-bottom:1px solid #c3c8cf;border-right:none;"></div>
<div class="r" style="left:1459.00px;top:453.00px;width:127.00px;height:24px;overflow:hidden"><div class="t" style="left:6.20px;top:7.08px;font-size:10px;color:#4a4a4a;letter-spacing:0.332px">overrideMinBrkrStg</div></div>
<svg style="left:1592.25px;top:456.6px" width="10.5" height="10.5" viewBox="0 0 11 11"><rect x="0" y="0" width="11" height="11" rx="2.2" fill="#6b6b6b"/><path d="M2.3 5.6 L4.5 7.9 L8.8 2.9" fill="none" stroke="#fff" stroke-width="1.7"/></svg>
<svg style="left:1638px;top:455px" width="12" height="13" viewBox="0 0 12 13"><path d="M4 2.3 V1 Q4 0.4 4.6 0.4 H8.4 Q9 0.4 9 1 V2.3" fill="none" stroke="#2464c8" stroke-width="1.1"/><rect x="0.2" y="2" width="11.8" height="1.9" fill="#2464c8"/><path d="M1.5 3.8 H11.2 L10.9 12.2 Q10.8 13 10.1 13 H2.5 Q1.8 13 1.7 12.2 Z" fill="#2464c8"/><path d="M4.5 5 V11.5 M6.5 5 V11.5 M8.5 5 V11.5" stroke="#fff" stroke-width="1"/></svg>
<svg style="left:14px;top:480.6px" width="10" height="10" viewBox="0 0 11 11"><rect x="0" y="0" width="11" height="11" rx="2.2" fill="#6b6b6b"/><path d="M2.3 5.6 L4.5 7.9 L8.8 2.9" fill="none" stroke="#fff" stroke-width="1.7"/></svg>
<div class="r" style="left:34.00px;top:477.00px;width:53.00px;height:24.00px;background:#fffaa5;border:1px solid #d5d9de;border-bottom:1px solid #c3c8cf;"></div>
<div class="r" style="left:35.00px;top:477.00px;width:45.00px;height:24px;overflow:hidden"><div class="t" style="left:5.60px;top:6.78px;font-size:10px;color:#4a4a4a;letter-spacing:0.154px">E23</div></div>
<div class="r" style="left:86.00px;top:477.00px;width:73.00px;height:24.00px;background:#fff;border:1px solid #d5d9de;border-bottom:1px solid #c3c8cf;"></div>
<div class="r" style="left:158.00px;top:477.00px;width:72.00px;height:24.00px;background:#fff;border:1px solid #d5d9de;border-bottom:1px solid #c3c8cf;"></div>
<div class="r" style="left:158.00px;top:477.00px;width:3.80px;height:23.00px;background:#a83434"></div>
<div class="r" style="left:159.00px;top:477.00px;width:64.00px;height:24px;overflow:hidden"><div class="t" style="left:9.70px;top:6.78px;font-size:10px;color:#4a4a4a;letter-spacing:0.010px">Voltage...</div></div>
<div class="r" style="left:229.00px;top:477.00px;width:72.00px;height:24.00px;background:#fff;border:1px solid #d5d9de;border-bottom:1px solid #c3c8cf;"></div>
<div class="r" style="left:229.00px;top:477.00px;width:3.80px;height:23.00px;background:#a83434"></div>
<div class="r" style="left:230.00px;top:477.00px;width:64.00px;height:24px;overflow:hidden"><div class="t" style="left:10.60px;top:6.78px;font-size:10px;color:#4a4a4a;letter-spacing:-0.121px">Phase...</div></div>
<div class="r" style="left:300.00px;top:477.00px;width:54.00px;height:24.00px;background:#fff;border:1px solid #d5d9de;border-bottom:1px solid #c3c8cf;"></div>
<div class="r" style="left:300.00px;top:477.00px;width:3.80px;height:23.00px;background:#a83434"></div>
<div class="r" style="left:301.00px;top:477.00px;width:46.00px;height:24px;overflow:hidden"><div class="t" style="left:10.20px;top:6.78px;font-size:10px;color:#4a4a4a;letter-spacing:-0.121px">Train...</div></div>
<div class="r" style="left:353.00px;top:477.00px;width:63.00px;height:24.00px;background:#fff;border:1px solid #d5d9de;border-bottom:1px solid #c3c8cf;"></div>
<div class="r" style="left:353.00px;top:477.00px;width:3.80px;height:23.00px;background:#a83434"></div>
<div class="r" style="left:354.00px;top:477.00px;width:55.00px;height:24px;overflow:hidden"><div class="t" style="left:10.30px;top:6.78px;font-size:10px;color:#4a4a4a;letter-spacing:-0.302px">FLA</div></div>
<div class="r" style="left:415.00px;top:477.00px;width:117.00px;height:24.00px;background:#fff;border:1px solid #d5d9de;border-bottom:1px solid #c3c8cf;"></div>
<div class="r" style="left:416.00px;top:477.00px;width:109.00px;height:24px;overflow:hidden"><div class="t" style="left:6.10px;top:6.78px;font-size:10px;color:#4a4a4a;letter-spacing:0.049px">wiring...</div></div>
<div class="r" style="left:531.00px;top:477.00px;width:108.00px;height:24.00px;background:#fff;border:1px solid #d5d9de;border-bottom:1px solid #c3c8cf;"></div>
<div class="r" style="left:532.00px;top:477.00px;width:100.00px;height:24px;overflow:hidden"><div class="t" style="left:6.35px;top:6.78px;font-size:10px;color:#4a4a4a;letter-spacing:-0.302px">FDSCABLESIZE</div></div>
<div class="r" style="left:638.00px;top:477.00px;width:63.00px;height:24.00px;background:#fff;border:1px solid #d5d9de;border-bottom:1px solid #c3c8cf;"></div>
<div class="r" style="left:639.00px;top:477.00px;width:55.00px;height:24px;overflow:hidden"><div class="t" style="left:6.20px;top:6.78px;font-size:10px;color:#4a4a4a;letter-spacing:-0.302px">BT</div></div>
<div class="r" style="left:700.00px;top:477.00px;width:63.00px;height:24.00px;background:#fff;border:1px solid #d5d9de;border-bottom:1px solid #c3c8cf;"></div>
<div class="r" style="left:701.00px;top:477.00px;width:55.00px;height:24px;overflow:hidden"><div class="t" style="left:6.35px;top:6.78px;font-size:10px;color:#4a4a4a;letter-spacing:-0.302px">BTS</div></div>
<div class="r" style="left:762.00px;top:477.00px;width:163.00px;height:24.00px;background:#fff;border:1px solid #d5d9de;border-bottom:1px solid #c3c8cf;"></div>
<div class="r" style="left:762.00px;top:477.00px;width:3.80px;height:23.00px;background:#a83434"></div>
<div class="r" style="left:763.00px;top:477.00px;width:155.00px;height:24px;overflow:hidden"><div class="t" style="left:10.45px;top:6.78px;font-size:10px;color:#4a4a4a;letter-spacing:0.391px">Description</div></div>
<div class="r" style="left:924.00px;top:477.00px;width:90.00px;height:24.00px;background:#fff;border:1px solid #d5d9de;border-bottom:1px solid #c3c8cf;"></div>
<div class="r" style="left:925.00px;top:477.00px;width:82.00px;height:24px;overflow:hidden"><div class="t" style="left:5.60px;top:6.78px;font-size:10px;color:#4a4a4a;letter-spacing:-0.121px">Level...</div></div>
<div class="r" style="left:1013.00px;top:477.00px;width:90.00px;height:24.00px;background:#fff;border:1px solid #d5d9de;border-bottom:1px solid #c3c8cf;"></div>
<div class="r" style="left:1014.00px;top:477.00px;width:82.00px;height:24px;overflow:hidden"><div class="t" style="left:6.20px;top:6.78px;font-size:10px;color:#4a4a4a;letter-spacing:0.000px">X</div></div>
<div class="r" style="left:1102.00px;top:477.00px;width:90.00px;height:24.00px;background:#fff;border:1px solid #d5d9de;border-bottom:1px solid #c3c8cf;"></div>
<div class="r" style="left:1103.00px;top:477.00px;width:82.00px;height:24px;overflow:hidden"><div class="t" style="left:6.35px;top:6.78px;font-size:10px;color:#4a4a4a;letter-spacing:0.000px">Y</div></div>
<div class="r" style="left:1191.00px;top:477.00px;width:90.00px;height:24.00px;background:#fff;border:1px solid #d5d9de;border-bottom:1px solid #c3c8cf;"></div>
<div class="r" style="left:1192.00px;top:477.00px;width:82.00px;height:24px;overflow:hidden"><div class="t" style="left:6.35px;top:6.78px;font-size:10px;color:#4a4a4a;letter-spacing:0.332px">Demand Factor</div></div>
<div class="r" style="left:1280.00px;top:477.00px;width:90.00px;height:24.00px;background:#fff;border:1px solid #d5d9de;border-bottom:1px solid #c3c8cf;"></div>
<div class="r" style="left:1280.00px;top:477.00px;width:3.80px;height:23.00px;background:#a83434"></div>
<div class="r" style="left:1369.00px;top:477.00px;width:90.00px;height:24.00px;background:#fff;border:1px solid #d5d9de;border-bottom:1px solid #c3c8cf;"></div>
<div class="r" style="left:1369.00px;top:477.00px;width:3.80px;height:23.00px;background:#a83434"></div>
<div class="r" style="left:1370.00px;top:477.00px;width:82.00px;height:24px;overflow:hidden"><div class="t" style="left:10.60px;top:6.78px;font-size:10px;color:#4a4a4a;letter-spacing:-0.031px">Poc Type...</div></div>
<div class="r" style="left:1458.00px;top:477.00px;width:134.25px;height:24.00px;background:#fff;border:1px solid #d5d9de;border-bottom:1px solid #c3c8cf;border-right:none;"></div>
<div class="r" style="left:1459.00px;top:477.00px;width:127.00px;height:24px;overflow:hidden"><div class="t" style="left:6.20px;top:6.78px;font-size:10px;color:#4a4a4a;letter-spacing:0.332px">overrideMinBrkrStg</div></div>
<svg style="left:1592.25px;top:480.3px" width="10.5" height="10.5" viewBox="0 0 11 11"><rect x="0.5" y="0.5" width="10" height="10" rx="2" fill="#fff" stroke="#555" stroke-width="1"/></svg>
<svg style="left:1638px;top:479px" width="12" height="13" viewBox="0 0 12 13"><path d="M4 2.3 V1 Q4 0.4 4.6 0.4 H8.4 Q9 0.4 9 1 V2.3" fill="none" stroke="#2464c8" stroke-width="1.1"/><rect x="0.2" y="2" width="11.8" height="1.9" fill="#2464c8"/><path d="M1.5 3.8 H11.2 L10.9 12.2 Q10.8 13 10.1 13 H2.5 Q1.8 13 1.7 12.2 Z" fill="#2464c8"/><path d="M4.5 5 V11.5 M6.5 5 V11.5 M8.5 5 V11.5" stroke="#fff" stroke-width="1"/></svg>
</div>
<div class="r" style="left:14.00px;top:499.00px;width:1829.00px;height:17.00px;background:#f1f1f1"></div>
<svg style="left:20px;top:504px" width="5" height="7" viewBox="0 0 5 7"><path d="M4.5 0 V7 L0 3.5 Z" fill="#a3a3a3"/></svg>
<svg style="left:1833px;top:504px" width="5" height="7" viewBox="0 0 5 7"><path d="M0.5 0 V7 L5 3.5 Z" fill="#a3a3a3"/></svg>
<div class="r" style="left:1843.00px;top:302.00px;width:17.00px;height:197.00px;background:#f1f1f1"></div>
<svg style="left:1848px;top:308.8px" width="7.5" height="4.5" viewBox="0 0 7.5 4.5"><path d="M0 4.5 H7.5 L3.75 0 Z" fill="#a3a3a3"/></svg>
<svg style="left:1848px;top:488px" width="7.5" height="4.5" viewBox="0 0 7.5 4.5"><path d="M0 0 H7.5 L3.75 4.5 Z" fill="#a3a3a3"/></svg>
<div class="r" style="left:1843.00px;top:499.00px;width:17.00px;height:17.00px;background:#dcdcdc"></div>
<div class="t" style="left:45.20px;top:531.61px;font-size:10.8px;color:#c8c8c8;">«</div>
<div class="t" style="left:60.60px;top:531.61px;font-size:10.8px;color:#c8c8c8;letter-spacing:0.5px;">Previous</div>
<div class="r" style="left:115.00px;top:525.00px;width:22.00px;height:23.00px;background:#2196e8"></div>
<div class="t" style="left:123.00px;top:531.61px;font-size:10.8px;color:#fff;font-weight:bold;">1</div>
<div class="t" style="left:145.80px;top:531.61px;font-size:10.8px;color:#c8c8c8;letter-spacing:0.6px;">Next</div>
<div class="t" style="left:179.00px;top:531.61px;font-size:10.8px;color:#c8c8c8;">»</div>
<div class="t" style="left:1606.40px;top:532.19px;font-size:11.7px;color:#1a73d9;letter-spacing:0.079px;">Add additional TPOC...</div>
<div class="r" style="left:1730.00px;top:525.00px;width:44.00px;height:29.00px;background:#e4e6ea;border-radius:3px"></div>
<div class="t" style="left:1734.80px;top:533.79px;font-size:11.7px;color:#222;letter-spacing:-0.2px;">Cancel</div>
<div class="r" style="left:1786.00px;top:525.00px;width:47.00px;height:29.00px;background:#5f9fd3;border-radius:4px"></div>
<div class="t" style="left:1790.20px;top:533.79px;font-size:11.7px;color:#fff;font-weight:bold;letter-spacing:-0.27px;">Submit</div>

</body></html>
